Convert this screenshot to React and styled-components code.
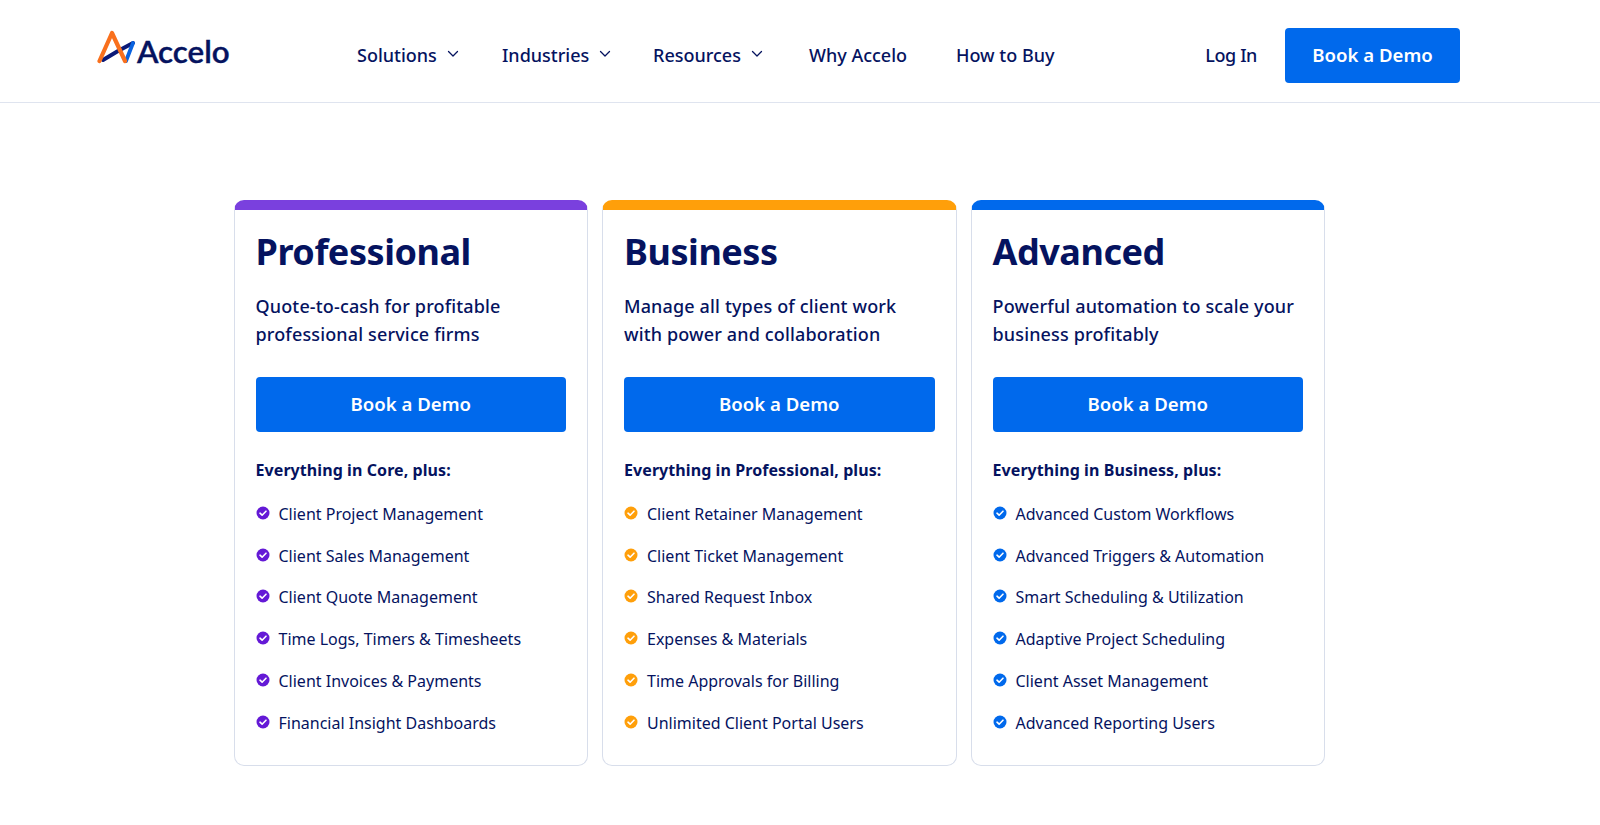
import React from 'react'
import styled, { createGlobalStyle } from 'styled-components'

const NAVY = '#05135f'
const BLUE = '#0069ec'

const plans = [
  {
    name: 'Professional',
    bar: '#7a40de',
    check: '#6419d6',
    desc: ['Quote-to-cash for profitable', 'professional service firms'],
    lead: 'Everything in Core, plus:',
    items: ['Client Project Management', 'Client Sales Management', 'Client Quote Management', 'Time Logs, Timers & Timesheets', 'Client Invoices & Payments', 'Financial Insight Dashboards'],
  },
  {
    name: 'Business',
    bar: '#ff9f0a',
    check: '#ff9f0a',
    desc: ['Manage all types of client work', 'with power and collaboration'],
    lead: 'Everything in Professional, plus:',
    items: ['Client Retainer Management', 'Client Ticket Management', 'Shared Request Inbox', 'Expenses & Materials', 'Time Approvals for Billing', 'Unlimited Client Portal Users'],
  },
  {
    name: 'Advanced',
    bar: '#0069ec',
    check: '#0069ec',
    desc: ['Powerful automation to scale your', 'business profitably'],
    lead: 'Everything in Business, plus:',
    items: ['Advanced Custom Workflows', 'Advanced Triggers & Automation', 'Smart Scheduling & Utilization', 'Adaptive Project Scheduling', 'Client Asset Management', 'Advanced Reporting Users'],
  },
]

const Chevron = () => (
  <ChevronIcon viewBox="0 0 12 8" fill="none" stroke={NAVY} strokeWidth="1.3" strokeLinecap="round" strokeLinejoin="round">
    <path d="M1.5 1.5 6 6l4.5-4.5" />
  </ChevronIcon>
)

const Check = ({ color }) => (
  <CheckIcon viewBox="0 0 14 14">
    <circle cx="7" cy="7" r="6.5" fill={color} />
    <path d="M4 7.2 6.1 9.2 10 5.2" fill="none" stroke="#fff" strokeWidth="1.6" strokeLinecap="round" strokeLinejoin="round" />
  </CheckIcon>
)

const App = () => {
  return (
    <>
      <GlobalStyle />
      <Header>
        <Logo>
          <svg width="40" height="38" viewBox="0 0 40 38" fill="none">
            <path d="M6 32 21 23 36 15" stroke="#0b1a78" strokeWidth="4" strokeLinecap="round" />
            <path d="M36 15 29 33" stroke="#0a63e0" strokeWidth="3.8" strokeLinecap="round" />
            <path d="M2.5 33 15 5l13 28" stroke="#f9701d" strokeWidth="4.2" strokeLinecap="round" strokeLinejoin="round" />
          </svg>
          <LogoText>Accelo</LogoText>
        </Logo>
        <Nav>
          <NavItem $w={145}>Solutions <Chevron /></NavItem>
          <NavItem $w={151}>Industries <Chevron /></NavItem>
          <NavItem $w={156}>Resources <Chevron /></NavItem>
          <NavItem $w={147}>Why Accelo</NavItem>
          <NavItem>How to Buy</NavItem>
        </Nav>
        <Right>
          <LogIn>Log In</LogIn>
          <HeaderButton>Book a Demo</HeaderButton>
        </Right>
      </Header>
      <Main>
        {plans.map((plan) => (
          <Card key={plan.name} $bar={plan.bar}>
            <Title>{plan.name}</Title>
            <Desc>{plan.desc[0]}<br />{plan.desc[1]}</Desc>
            <CardButton>Book a Demo</CardButton>
            <Lead>{plan.lead}</Lead>
            <List>
              {plan.items.map((item) => (
                <Item key={item}><Check color={plan.check} />{item}</Item>
              ))}
            </List>
          </Card>
        ))}
      </Main>
    </>
  )
}

export default App

const GlobalStyle = createGlobalStyle`
  body {
    margin: 0;
    background: #fff;
    color: ${NAVY};
    font-family: "Noto Sans", "Open Sans", sans-serif;
  }
`
const Header = styled.header`
  height: 94px;
  padding: 8px 140px 0 97px;
  border-bottom: 1px solid #dfe4ef;
  display: flex;
  align-items: center;
`
const Logo = styled.div`
  display: flex;
  align-items: center;
  width: 260px;
  margin-top: -16px;
`
const LogoText = styled.span`
  font-family: "Lato", "Noto Sans", sans-serif;
  font-size: 31.3px;
  font-weight: 600;
  -webkit-text-stroke: 0.4px ${NAVY};
  margin-top: 8px;
`
const Nav = styled.nav`
  display: flex;
  align-items: center;
  flex: 1;
`
const NavItem = styled.a`
  display: flex;
  align-items: center;
  gap: 10px;
  font-size: 18px;
  font-weight: 500;
  width: ${(p) => (p.$w ? `${p.$w}px` : 'auto')};
`
const LogIn = styled(NavItem)`
  letter-spacing: -0.4px;
`
const ChevronIcon = styled.svg`
  width: 12px;
  height: 8px;
  margin-top: -2px;
`
const Right = styled.div`
  display: flex;
  align-items: center;
  gap: 28px;
`
const HeaderButton = styled.a`
  width: 175px;
  height: 55px;
  box-sizing: border-box;
  padding-bottom: 2px;
  border-radius: 4px;
  background: ${BLUE};
  color: #fff;
  display: flex;
  align-items: center;
  justify-content: center;
  font-size: 18.6px;
  font-weight: 600;
`
const Main = styled.main`
  display: flex;
  gap: 14px;
  padding: 97px 0 0 233.5px;
`
const Card = styled.section`
  width: 354.5px;
  height: 566px;
  box-sizing: border-box;
  border: 1px solid #d8deeb;
  border-top: 10px solid ${(p) => p.$bar};
  border-radius: 10px;
  padding: 0 21px;
`
const Title = styled.h2`
  margin: 18px 0 0;
  font-size: 36px;
  line-height: 48px;
  font-weight: 700;
  letter-spacing: -0.45px;
`
const Desc = styled.p`
  margin: 16px 0 0;
  font-size: 18px;
  line-height: 28px;
  font-weight: 500;
  letter-spacing: 0.15px;
`
const CardButton = styled(HeaderButton)`
  width: auto;
  margin-top: 29px;
`
const Lead = styled.p`
  margin: 26px 0 0;
  font-size: 16px;
  line-height: 24px;
  font-weight: 700;
  letter-spacing: 0.08px;
`
const List = styled.ul`
  list-style: none;
  margin: 11px 0 0;
  padding: 0;
`
const Item = styled.li`
  display: flex;
  align-items: center;
  gap: 9px;
  height: 41.8px;
  font-size: 16px;
`
const CheckIcon = styled.svg`
  width: 14px;
  height: 14px;
  flex: none;
  margin-top: -2px;
`
